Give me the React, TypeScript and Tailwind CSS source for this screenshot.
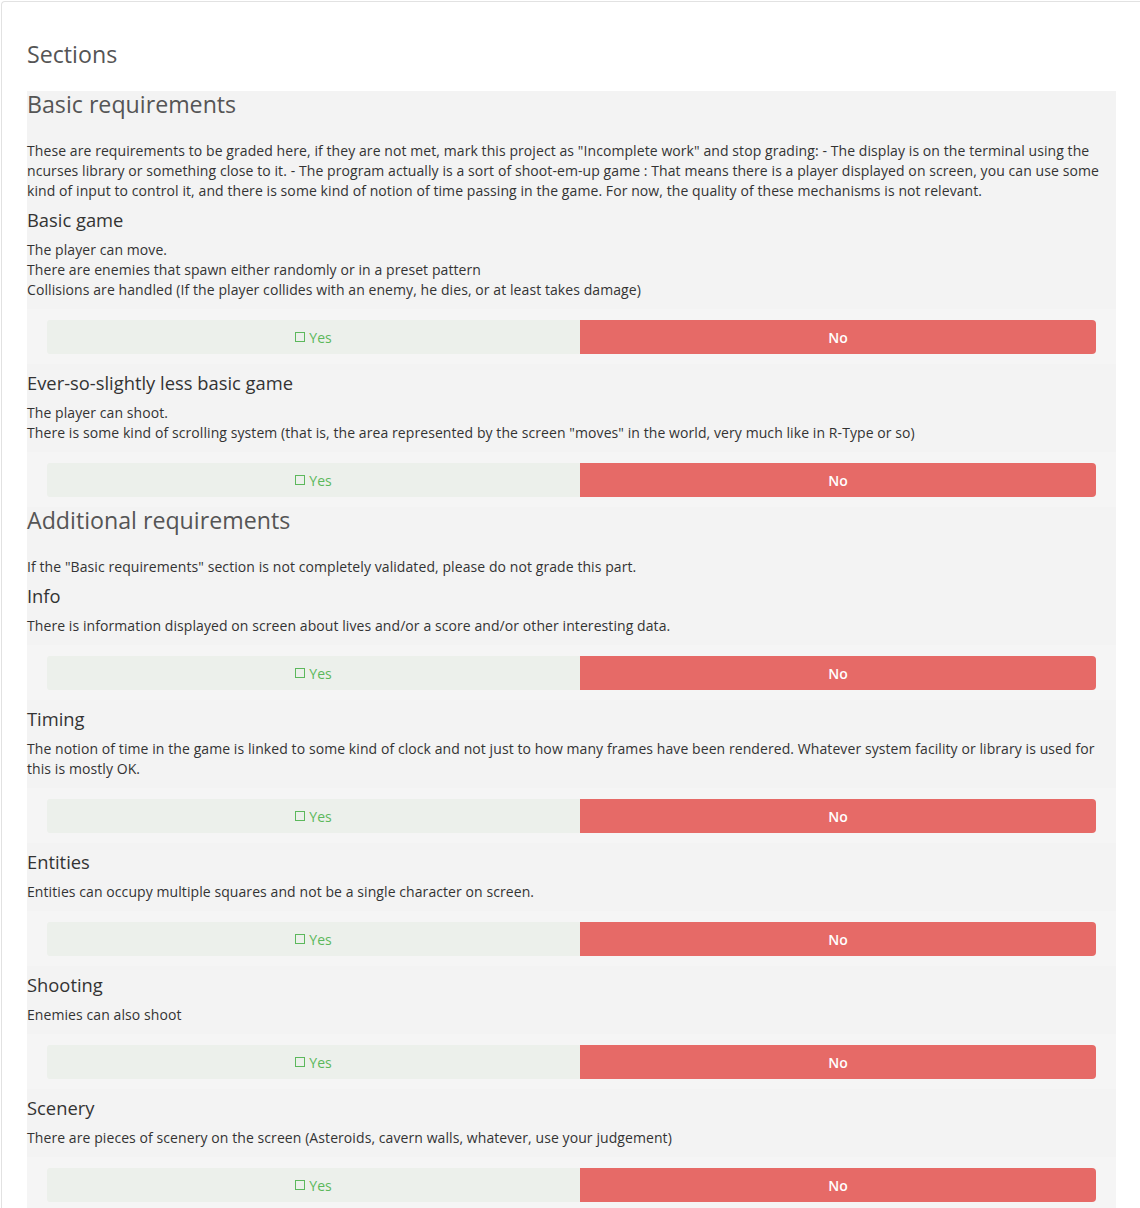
import React from 'react'

type Question = { title: string; lines: string[] }
type Section = { title: string; intro: string; questions: Question[] }

const sections: Section[] = [
  {
    title: 'Basic requirements',
    intro:
      'These are requirements to be graded here, if they are not met, mark this project as "Incomplete work" and stop grading: - The display is on the terminal using the ncurses library or something close to it. - The program actually is a sort of shoot-em-up game : That means there is a player displayed on screen, you can use some kind of input to control it, and there is some kind of notion of time passing in the game. For now, the quality of these mechanisms is not relevant.',
    questions: [
      {
        title: 'Basic game',
        lines: [
          'The player can move.',
          'There are enemies that spawn either randomly or in a preset pattern',
          'Collisions are handled (If the player collides with an enemy, he dies, or at least takes damage)',
        ],
      },
      {
        title: 'Ever-so-slightly less basic game',
        lines: [
          'The player can shoot.',
          'There is some kind of scrolling system (that is, the area represented by the screen "moves" in the world, very much like in R-Type or so)',
        ],
      },
    ],
  },
  {
    title: 'Additional requirements',
    intro: 'If the "Basic requirements" section is not completely validated, please do not grade this part.',
    questions: [
      { title: 'Info', lines: ['There is information displayed on screen about lives and/or a score and/or other interesting data.'] },
      {
        title: 'Timing',
        lines: [
          'The notion of time in the game is linked to some kind of clock and not just to how many frames have been rendered. Whatever system facility or library is used for this is mostly OK.',
        ],
      },
      { title: 'Entities', lines: ['Entities can occupy multiple squares and not be a single character on screen.'] },
      { title: 'Shooting', lines: ['Enemies can also shoot'] },
      {
        title: 'Scenery',
        lines: ['There are pieces of scenery on the screen (Asteroids, cavern walls, whatever, use your judgement)'],
      },
    ],
  },
]

function Answer() {
  return (
    <div className="mt-[9px] bg-[#f5f5f5] px-[20px] pt-[11px] pb-[10px]">
      <div className="flex h-[34px] text-[14px]">
        <button className="flex w-[533px] items-center justify-center gap-[4px] rounded-l-[3px] bg-[#ecf0eb] text-[#5cb85c]">
          <span className="inline-block h-[10px] w-[10px] border border-[#5cb85c]" />
          Yes
        </button>
        <button className="flex flex-1 items-center justify-center rounded-r-[4px] bg-[#e66a67] font-semibold text-white">
          No
        </button>
      </div>
    </div>
  )
}

export default function App() {
  return (
    <div className="min-h-[1208px] bg-white pt-px pl-px" style={{ fontFamily: '"Open Sans", "Liberation Sans", sans-serif' }}>
      <div className="min-h-[1207px] rounded-tl-[4px] border-t border-l border-[#e2e2e2] pt-[37px] pr-[24px] pl-[25px]">
        <h1 className="text-[23.2px] leading-[30px] text-[#555]">Sections</h1>
        <div className="mt-[22px] bg-[#f3f3f3]">
          {sections.map((s) => (
            <div key={s.title}>
              <h2 className="text-[23.2px] leading-[26px] text-[#555]">{s.title}</h2>
              <p className="mt-[24px] text-[14px] leading-[20px] tracking-[0.08px] text-[#333]">{s.intro}</p>
              {s.questions.map((q) => (
                <div key={q.title}>
                  <h3 className="mt-[7px] text-[18.35px] leading-[24px] text-[#333]">{q.title}</h3>
                  <div className="mt-[8px] text-[14px] leading-[20px] tracking-[0.08px] text-[#333]">
                    {q.lines.map((l) => (
                      <div key={l}>{l}</div>
                    ))}
                  </div>
                  <Answer />
                </div>
              ))}
            </div>
          ))}
        </div>
      </div>
    </div>
  )
}
